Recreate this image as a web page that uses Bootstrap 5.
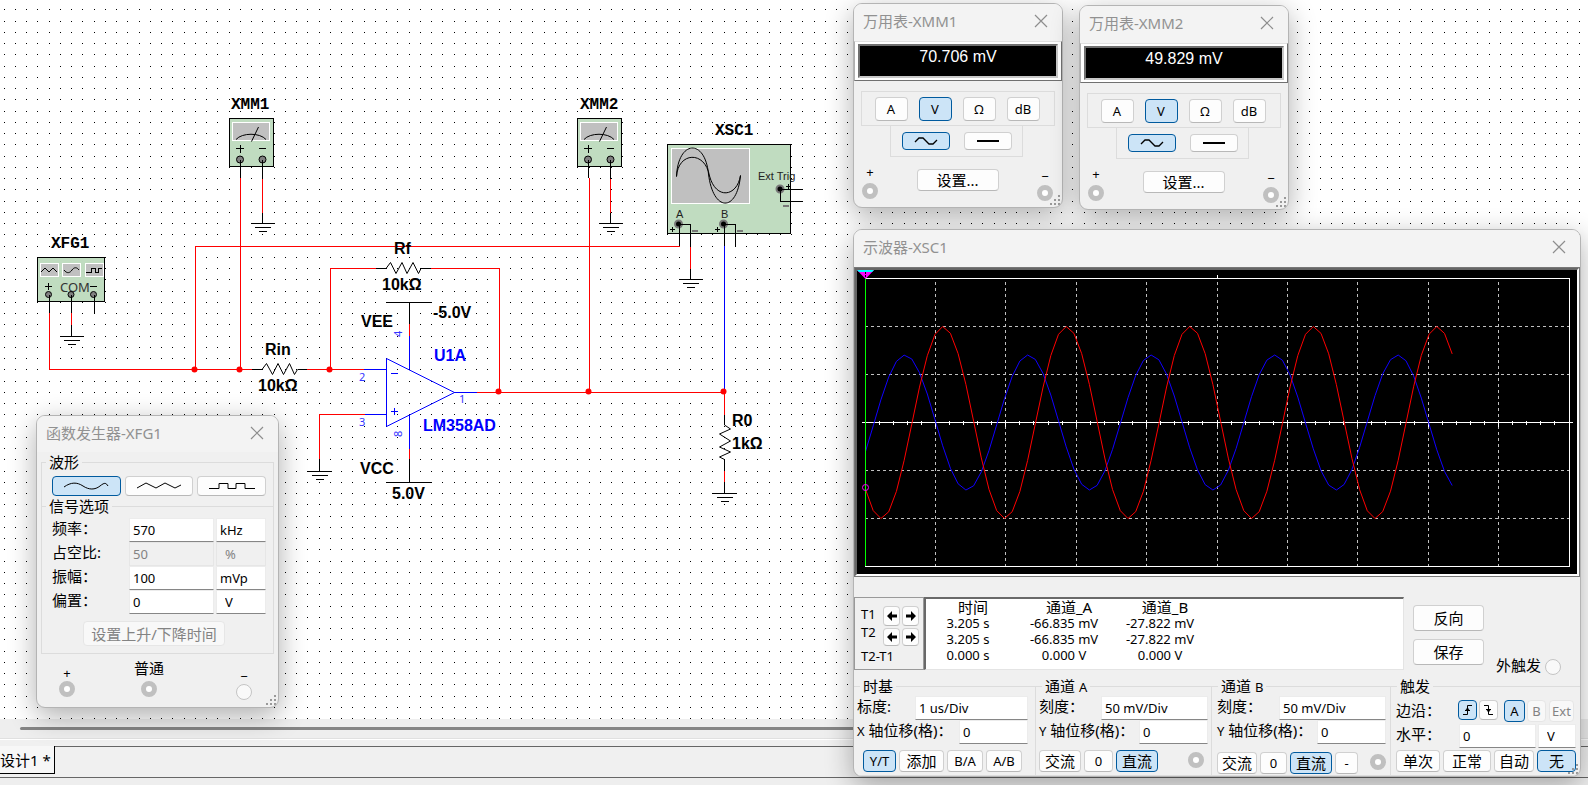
<!DOCTYPE html>
<html lang="zh-CN">
<head>
<meta charset="utf-8">
<meta name="viewport" content="width=device-width, initial-scale=1">
<title>设计1</title>
<link href="https://cdn.jsdelivr.net/npm/bootstrap@5.3.0/dist/css/bootstrap.min.css" rel="stylesheet">
<style>
  :root { --face: #f0f0f0; --rule: #dcdcdc; --accent: #005a9e; --accent-bg: #cce4f7; }
  body { font: 13px/16px "Noto Sans", "Noto Sans CJK SC", sans-serif; color: #000; background: #fff; }
  .desk { z-index: 0; }
  .sheet { shape-rendering: crispEdges; }
  .sheet .smooth, .sheet circle, .sheet text { shape-rendering: auto; }
  .sheet .lbl { font: bold 16px "Liberation Sans", sans-serif; }
  .sheet .ref { font: bold 16px "Liberation Mono", monospace; }
  .sheet .pin { font: 11px "Noto Sans", sans-serif; fill: #33f; }
  .sheet .port { font: 11px "Liberation Sans", sans-serif; fill: #222; }
  .k, .r, .b { fill: none; stroke: #000; }
  .r { stroke: #f00; } .b { stroke: #00f; }
  .body-fill { fill: #c0dcc0; stroke: #000; }
  .scr { fill: #c0c0c0; stroke: #fff; }
  .term { fill: #808080; stroke: #000; }

  .hscroll { height: 20px; background: #eee; border-bottom: 1px solid #e0e0e0; padding: 8px 0 0 20px; }
  .hscroll .thumb { height: 3px; width: 80%; background: #858585; border-radius: 2px; }
  .tabs { height: 39px; padding-top: 6px; background: var(--face); border-top: 1px solid #fff; border-bottom: 1px solid #666; }
  .tabs .rest { border-top: 1px solid #666; }
  .tabs .tab { width: 55px; height: 28px; border: 0; border-right: 1px solid #000; border-bottom: 1px solid #000; background: #f7f7f7; font-size: 15px; padding: 0; white-space: nowrap; text-align: left; }
  .foot { height: 7px; background: #eee; }

  .win { position: absolute; background: var(--face); border: 1px solid #b4b4b4; border-radius: 9px; box-shadow: 0 8px 28px rgba(0,0,0,.32); overflow: hidden; }
  .win .bar { height: 37px; padding: 0 14px 3px 9px; background: #f3f3f3; color: #919191; font-size: 15px; line-height: 20px; }
  .win.xfg .bar { height: 36px; }
  .win .x { border: 0; background: none; padding: 0; width: 14px; height: 14px; display: flex; color: #8d8d8d; }
  .xfg { left: 36px; top: 415px; width: 243px; }
  .xmm1 { left: 853px; top: 3px; width: 210px; }
  .xmm2 { left: 1079px; top: 5px; width: 210px; }
  .xsc { left: 853px; top: 229px; width: 728px; }
  .grip { position: absolute; right: 1px; bottom: 1px; width: 11px; height: 11px; }

  .key { border: 1px solid #d0d0d0; border-bottom-color: #b8b8b8; border-radius: 4px; background: #fdfdfd; color: #000; padding: 0; display: flex; align-items: center; justify-content: center; font-size: 13px; line-height: 16px; white-space: nowrap; }
  .key.on { border-color: var(--accent); background: var(--accent-bg); }
  .key:disabled { color: #838383; background: #f8f8f8; border-color: #e6e6e6; }
  .zh { font-size: 15px; line-height: 20px; }
  .edit { border: 1px solid #ececec; border-bottom-color: #868686; background: #fff; padding: 0 3px; height: 24px; font: inherit; color: #000; min-width: 0; border-radius: 0; }
  .edit:disabled { background: var(--face); color: #838383; border-color: #e6e6e6; }
  .jack { display: block; width: 16px; height: 16px; border-radius: 50%; border: 5px solid #c0c0c0; background: #fff; }
  .jack.idle { border: 1px solid #c4c4c4; background: #f9f9f9; }

  fieldset.grp { border: 1px solid var(--rule); min-width: 0; }
  fieldset.grp > legend { float: none; width: auto; margin: 0 0 0 3px; padding: 0 3px; font-size: 15px; line-height: 20px; height: 20px; white-space: nowrap; }
  .grp small { font-size: 13px; }
  .xfg .grp { padding: 0 7px 0 6px; }
  .xfg .grp > legend { margin-left: -2px; }
  .xfg .wave-grp { height: 55px; border-bottom: 0; }
  .xfg .sig-grp { margin-top: -11px; padding-top: 2px; }
  .xfg .val { width: 85px; margin-right: 2px; }
  .xfg .unit { width: 50px; }
  .xfg .jacks { height: 53px; padding: 0 22px 0 18px; }

  .lcd { border: 1px solid; border-color: #e0e0e0 #707070 #707070 #b0b0b0; background: #fff; padding: 2px 3px; }
  .lcd output { display: block; height: 34px; border: 2px solid; border-color: #707070 #c8c8c8 #c8c8c8 #707070; background: #000; color: #fff; font: 16px/22px "Liberation Sans", sans-serif; text-align: center; }
  .modes { width: 194px; height: 35px; border: 1px solid var(--rule); gap: 11px; margin: 10px 0 0 7px; padding-right: 2px; }
  .waves { width: 133px; height: 31px; border: 1px solid var(--rule); border-top: 0; gap: 14px; margin-left: 36px; }
  .modes .key { width: 33px; height: 24px; }
  .waves .key { width: 48px; height: 18px; }
  .probe { padding: 7px 9px 6px 8px; }
  .probe .key { width: 82px; height: 22px; margin-top: 5px; }
  .probe .jack { margin-top: 3px; }
  .probe .neg .jack { margin-top: 1px; }

  .crt { border: 2px solid #666; border-right-color: #fff; border-bottom-color: #fff; outline: 1px solid #777; background: #000; margin: 1px 1px 0 1px; }
  .crt svg { display: block; width: 100%; height: 304px; }
  .tbox { width: 70px; height: 73px; border: 1px solid #999; padding: 0 4px 0 6px; }
  .tbox .key { width: 17px; height: 20px; }
  .tbox .names span { display: block; margin-bottom: 2px; }
  .tbox .names span + span { margin-bottom: 8px; }
  .reads { border: 1px solid #e4e4e4; border-top: 2px solid #696969; border-left: 2px solid #696969; background: #fff; width: 480px; }
  .reads table { width: 276px; table-layout: fixed; text-align: center; margin: 0; }
  .reads th { font-weight: 400; font-size: 15px; line-height: 16px; padding: 0 0 0 10px; }
  .reads td { padding: 0; line-height: 16px; }
  .ext { margin-bottom: -5px; }
  .panels { display: grid; grid-template-columns: 182fr 176fr 179fr 189fr; margin-top: 6px; }
  .panels .grp { height: 100px; border-left: 0; padding: 0 7px 0 3px; }
  .panels .cha { padding-right: 3px; }
  .panels .chb, .panels .trg { padding: 0 4px 0 5px; }
  .panels .chb > legend, .panels .trg > legend { margin-left: 1px; }
  .panels label { white-space: nowrap; }
  .panels .keys { gap: 3px; height: 22px; margin-top: 6px; }
  .panels .chb .keys { margin-top: 8px; }
  .panels .trg .keys { margin-top: 2px; }
  .panels .keys .key { height: 22px; }
  .panels .keys .jack { margin-top: 2px; }
</style>
</head>
<body class="vh-100 d-flex flex-column overflow-hidden position-relative">

<main class="desk flex-fill position-relative">
<svg class="sheet d-block position-absolute w-100 h-100" aria-label="电路图">
  <defs>
    <pattern id="dots" width="45" height="45" patternUnits="userSpaceOnUse">
      <path stroke="#000" stroke-dasharray="1 44" d="M4 9.5h41M15 9.5h41M26 9.5h41M37 9.5h41M4 21.5h41M15 21.5h41M26 21.5h41M37 21.5h41M4 32.5h41M15 32.5h41M26 32.5h41M37 32.5h41M4 43.5h41M15 43.5h41M26 43.5h41M37 43.5h41"/>
    </pattern>
    <g id="gnd"><path class="k" d="M-11.5 .5h24M-7.5 4.5h16M-3.5 8.5h8"/></g>
    <g id="meter">
      <rect class="body-fill" x="229.5" y="118.5" width="44" height="48"/>
      <rect class="scr" x="232.5" y="122.5" width="37" height="18"/>
      <path class="k smooth" d="M236 139.500C242 132.500 260 132.500 266 139.500M251.500 141.500L258.500 127"/>
      <path class="k" d="M236 148.500h8M240.500 145v8M259 148.500h7"/>
      <circle class="term" cx="240" cy="159.500" r="3.500"/><circle class="term" cx="262.500" cy="159.500" r="3.500"/>
      <path class="k" d="M240.500 160v18M262.500 160v19M262.500 213v10"/>
      <path class="r" d="M262.500 179v34"/>
      <use href="#gnd" x="262" y="223"/>
    </g>
  </defs>
  <rect width="100%" height="100%" fill="url(#dots)"/>

  <g>
    <use href="#meter"/><use href="#meter" x="348"/>
    <rect class="body-fill" x="37.500" y="257.500" width="67" height="44"/>
    <rect class="scr" x="40.500" y="263.500" width="18" height="13"/><rect class="scr" x="62.500" y="263.500" width="18" height="13"/><rect class="scr" x="85.500" y="263.500" width="18" height="13"/>
    <path class="k smooth" d="M41 272l4-4 4 4 4-4 4 4M64 270c3 4 6 3 8 0s5-3 7 0"/>
    <path class="k" d="M86 272.500h5v-4h4v4h3v-4h4M45 286.500h7M48.500 283v7M90 286.500h7"/>
    <text x="60" y="292" font-size="13" fill="#333">COM</text>
    <circle class="term" cx="48.500" cy="294.500" r="3"/><circle class="term" cx="71" cy="294.500" r="3"/><circle class="term" cx="93.500" cy="294.500" r="3"/>
    <path class="k" d="M49.500 295v18M71.500 295v18M94.500 295v18M71.500 325v11"/>
    <path class="r" d="M71.500 313v12"/><use href="#gnd" x="71" y="336"/>
    <rect class="body-fill" x="667.500" y="144.500" width="123" height="89"/>
    <rect class="scr" x="671.500" y="148.500" width="78" height="55"/>
    <path class="k smooth" d="M676.500 176.500C678 140 705 138 708.500 174C713 212 737 213 740.500 175.500M676.500 176.500C678 152 705 150 709.500 176C716 200 737 197 740.500 175.500"/>
    <text class="port" x="758" y="180">Ext Trig</text><text class="port" x="676" y="218">A</text><text class="port" x="721" y="218">B</text>
    <g fill="#000" stroke="#777" stroke-width="2"><circle cx="678.500" cy="224" r="3.500"/><circle cx="723.500" cy="224" r="3.500"/><circle cx="780" cy="189" r="3.500"/></g>
    <path class="k" d="M670 229.500h5M672.500 227v5M715 229.500h5M717.500 227v5M786 186.500h5M788.500 184v5"/>
    <path stroke="#777" stroke-width="2" d="M692 231h6M737 231h6M783 206h6"/>
    <path class="k" d="M679.500 224v22M679 224.500h11.500V247M690.500 269v10M724.500 224v22M724 224.500h11.500V247M780 189.500h23M780.500 189v12.500H803"/>
    <path class="r" d="M690.500 247v22"/><use href="#gnd" x="690" y="279"/>
  </g>

  <path class="r" d="M49.500 313v56.500H252M307 369.500H364M195.500 369V246.500H679.500M240.500 178V369M330.500 369V268.500H376M431 268.500h68.500V392M477 392.500H724.500V415M589.500 178V392M409.500 324v12M409.500 449v10M365 414.500H319.500V459M724.500 471v11"/>
  <path class="b" d="M364 369.500h22M454 392.500h23M365 414.500h21M409.500 336v33M409.500 415v34M724.500 246V390M391 373.500h7M391 411.500h7M394.500 408v7"/>
  <path class="b smooth" d="M386.500 358.500V426.500L454.500 392.500Z"/>
  <path class="k" d="M252 369.500h10M298 369.500h9M376 268.500h10M421 268.500h10M386 302.500h46M409.500 302v22M409.500 459v23M386 482.500h46M319.500 459v12M724.500 415v10M724.500 459v12M724.500 482v11"/>
  <path class="k smooth" d="M262 369.500L266.500 363.500L272.500 374.500L278 363.500L283.500 374.500L289.500 363.500L294.500 374.500L297.500 369.500M386 268.500L390.500 262.500L396 273.500L402 262.500L407 273.500L413 262.500L418.500 273.500L421 268.500M724.500 425L730.500 429L719.500 434L730.500 441L719.500 447L730.500 452L719.500 457L724.500 459.500"/>
  <use href="#gnd" x="319" y="471"/><use href="#gnd" x="724" y="493"/>
  <g fill="#f00"><circle cx="194.500" cy="369.500" r="3"/><circle cx="239.500" cy="369.500" r="3"/><circle cx="329.500" cy="369.500" r="3"/><circle cx="498.500" cy="391.500" r="3"/><circle cx="588.500" cy="391.500" r="3"/><circle cx="723.500" cy="391.500" r="3"/></g>

  <g class="ref"><text x="231" y="109">XMM1</text><text x="580" y="109">XMM2</text><text x="51" y="248">XFG1</text><text x="715" y="135">XSC1</text></g>
  <g class="lbl"><text x="394" y="254">Rf</text><text x="382" y="290">10kΩ</text><text x="361" y="327">VEE</text><text x="433" y="318">-5.0V</text><text x="360" y="474">VCC</text><text x="392" y="499">5.0V</text><text x="265" y="355">Rin</text><text x="258" y="391">10kΩ</text><text x="732" y="426">R0</text><text x="732" y="449">1kΩ</text><text x="434" y="361" fill="#00f">U1A</text><text x="423" y="431" fill="#00f">LM358AD</text></g>
  <text class="pin" x="359" y="381">2</text><text class="pin" x="359" y="426">3</text><text class="pin" x="459" y="403">1</text>
  <text class="pin" transform="translate(402 337) rotate(-90)">4</text><text class="pin" transform="translate(402 437) rotate(-90)">8</text>
</svg>
</main>

<div class="hscroll"><div class="thumb"></div></div>
<nav class="tabs d-flex"><button class="tab" type="button">设计1 *</button><div class="rest flex-fill"></div></nav>
<div class="foot"></div>

<svg width="0" height="0" class="position-absolute"><defs>
  <symbol id="close" viewBox="0 0 14 14"><path d="M1 1l12 12M13 1L1 13" stroke="currentColor" stroke-width="1.200"/></symbol>
  <symbol id="grip" viewBox="0 0 11 11"><path fill="#999" d="M8 0h2v2h-2zM4 4h2v2h-2zM8 4h2v2h-2zM0 8h2v2h-2zM4 8h2v2h-2zM8 8h2v2h-2z"/></symbol>
  <symbol id="ac" viewBox="0 0 24 10"><path fill="none" stroke="#000" stroke-width="1.300" d="M1 6l4-4h4l6 6h4l4-4"/></symbol>
  <symbol id="left" viewBox="0 0 10 10"><path d="M0 5l5-5v3.500h5v3H5V10z"/></symbol>
  <symbol id="right" viewBox="0 0 10 10"><path d="M10 5L5 0v3.500H0v3h5V10z"/></symbol>
</defs></svg>

<section class="win xfg">
  <header class="bar d-flex align-items-center justify-content-between"><span>函数发生器-XFG1</span><button class="x" aria-label="关闭"><svg width="14" height="14"><use href="#close"/></svg></button></header>
  <div class="px-1">
    <fieldset class="grp wave-grp">
      <legend>波形</legend>
      <div class="d-flex gap-1 ps-1 pt-1">
        <button class="key on flex-fill" style="height:20px" aria-label="正弦波"><svg width="46" height="8" fill="none" stroke="#000"><path d="M1 5C8 0 14 0 20 4S32 8 37 4 43 1 45 4"/></svg></button>
        <button class="key flex-fill" aria-label="三角波"><svg width="46" height="8" fill="none" stroke="#000"><path d="M1 6L10 1L20 6L29 1L39 6L45 3"/></svg></button>
        <button class="key flex-fill" aria-label="方波"><svg width="46" height="8" fill="none" stroke="#000"><path d="M0 6.500h10v-5h9v5h8v-5h9v5h10"/></svg></button>
      </div>
    </fieldset>
    <fieldset class="grp sig-grp">
      <legend>信号选项</legend>
      <div class="d-flex ps-1"><label class="zh flex-fill" for="fq">频率：</label><input class="edit val" id="fq" value="570"><input class="edit unit" value="kHz" aria-label="频率单位"></div>
      <div class="d-flex ps-1"><label class="zh flex-fill" for="du">占空比:</label><input class="edit val" id="du" value="50" disabled><input class="edit unit ps-2" value="%" disabled aria-label="占空比单位"></div>
      <div class="d-flex ps-1"><label class="zh flex-fill" for="am">振幅：</label><input class="edit val" id="am" value="100"><input class="edit unit" value="mVp" aria-label="振幅单位"></div>
      <div class="d-flex ps-1"><label class="zh flex-fill" for="of">偏置：</label><input class="edit val" id="of" value="0"><input class="edit unit ps-2" value="V" aria-label="偏置单位"></div>
      <button class="key zh" style="width:142px;height:25px;margin:7px auto 7px 35px" disabled>设置上升/下降时间</button>
    </fieldset>
    <div class="jacks d-flex align-items-start text-center">
      <div style="padding-top:11px">+<i class="jack"></i></div>
      <div class="zh d-flex flex-column align-items-center pt-1" style="margin-left:59px">普通<i class="jack" style="margin-top:3px"></i></div>
      <div class="ms-auto" style="padding-top:14px">−<i class="jack idle"></i></div>
    </div>
  </div>
  <svg class="grip"><use href="#grip"/></svg>
</section>

<section class="win xmm1">
  <header class="bar d-flex align-items-center justify-content-between"><span>万用表-XMM1</span><button class="x" aria-label="关闭"><svg width="14" height="14"><use href="#close"/></svg></button></header>
  <div class="lcd"><output>70.706 mV</output></div>
  <div class="modes d-flex align-items-center justify-content-center"><button class="key">A</button><button class="key on">V</button><button class="key">Ω</button><button class="key">dB</button></div>
  <div class="waves d-flex align-items-center justify-content-center"><button class="key on" aria-label="交流"><svg width="24" height="10"><use href="#ac"/></svg></button><button class="key" aria-label="直流"><svg width="22" height="2"><path d="M0 0h22v2H0z"/></svg></button></div>
  <div class="probe d-flex align-items-start justify-content-between text-center">
    <div>+<i class="jack"></i></div>
    <button class="key zh">设置...</button>
    <div class="neg pt-1">−<i class="jack"></i></div>
  </div>
  <svg class="grip"><use href="#grip"/></svg>
</section>

<section class="win xmm2">
  <header class="bar d-flex align-items-center justify-content-between"><span>万用表-XMM2</span><button class="x" aria-label="关闭"><svg width="14" height="14"><use href="#close"/></svg></button></header>
  <div class="lcd"><output>49.829 mV</output></div>
  <div class="modes d-flex align-items-center justify-content-center"><button class="key">A</button><button class="key on">V</button><button class="key">Ω</button><button class="key">dB</button></div>
  <div class="waves d-flex align-items-center justify-content-center"><button class="key on" aria-label="交流"><svg width="24" height="10"><use href="#ac"/></svg></button><button class="key" aria-label="直流"><svg width="22" height="2"><path d="M0 0h22v2H0z"/></svg></button></div>
  <div class="probe d-flex align-items-start justify-content-between text-center">
    <div>+<i class="jack"></i></div>
    <button class="key zh">设置...</button>
    <div class="neg pt-1">−<i class="jack"></i></div>
  </div>
  <svg class="grip"><use href="#grip"/></svg>
</section>

<section class="win xsc">
  <header class="bar d-flex align-items-center justify-content-between"><span>示波器-XSC1</span><button class="x" aria-label="关闭"><svg width="14" height="14"><use href="#close"/></svg></button></header>
  <div class="crt">
    <svg viewBox="0 0 720 304" id="scope" fill="none">
      <g id="grid" stroke="#c0c0c0" stroke-dasharray="3 3" shape-rendering="crispEdges"></g>
      <path stroke="#fff" shape-rendering="crispEdges" d="M8 8.500H712.500V296.500H8M5 152.500H716M360.500 5v4"/>
      <path id="ticks" stroke="#fff" shape-rendering="crispEdges"/>
      <path id="chB" stroke="#10f"/>
      <path id="chA" stroke="#f00"/>
      <path stroke="#0f0" shape-rendering="crispEdges" d="M8.500 8V296"/>
      <path fill="#f0f" d="M0 0H17L8.500 9z"/><path fill="#0ff" d="M0 0H17L15 2H2z"/><path stroke="#000" stroke-dasharray="2 1" d="M8.500 2v5"/>
      <circle cx="8.500" cy="217.500" r="3" stroke="#f0f"/>
    </svg>
  </div>
  <div class="d-flex" style="margin-top:21px">
    <div class="tbox d-flex justify-content-between">
      <div class="names pt-2 text-nowrap" style="width:20px"><span>T1</span><span>T2</span><span>T2-T1</span></div>
      <div class="d-grid align-content-start pt-2" style="grid-template-columns:17px 17px;gap:2px">
        <button class="key" aria-label="T1 左移"><svg width="10" height="10"><use href="#left"/></svg></button><button class="key" aria-label="T1 右移"><svg width="10" height="10"><use href="#right"/></svg></button>
        <button class="key" style="height:18px" aria-label="T2 左移"><svg width="10" height="10"><use href="#left"/></svg></button><button class="key" style="height:18px" aria-label="T2 右移"><svg width="10" height="10"><use href="#right"/></svg></button>
      </div>
    </div>
    <div class="reads">
      <table>
        <colgroup><col style="width:84px"><col style="width:108px"><col style="width:84px"></colgroup>
        <thead><tr><th>时间</th><th>通道_A</th><th>通道_B</th></tr></thead>
        <tbody><tr><td>3.205 s</td><td>-66.835 mV</td><td class="text-nowrap">-27.822 mV</td></tr><tr><td>3.205 s</td><td>-66.835 mV</td><td class="text-nowrap">-27.822 mV</td></tr><tr><td>0.000 s</td><td>0.000 V</td><td>0.000 V</td></tr></tbody>
      </table>
    </div>
    <div class="d-flex flex-column gap-2 pt-2" style="margin-left:9px"><button class="key zh" style="width:71px;height:26px">反向</button><button class="key zh" style="width:71px;height:26px">保存</button></div>
    <div class="ext d-flex align-items-end ms-auto pe-3 gap-1"><span class="zh">外触发</span><i class="jack idle" style="margin-right:3px"></i></div>
  </div>
  <div class="panels">
    <fieldset class="grp"><legend>时基</legend>
      <div class="d-flex justify-content-between"><label class="zh" for="tb">标度:</label><input class="edit" style="width:113px" id="tb" value="1 us/Div"></div>
      <div class="d-flex justify-content-between"><label class="zh" for="xp"><small>X</small> 轴位移(格)：</label><input class="edit" style="width:69px" id="xp" value="0"></div>
      <div class="keys d-flex" style="padding-left:6px"><button class="key on" style="width:33px">Y/T</button><button class="key zh" style="width:45px">添加</button><button class="key" style="width:36px">B/A</button><button class="key" style="width:36px">A/B</button></div>
    </fieldset>
    <fieldset class="grp cha"><legend>通道 <small>A</small></legend>
      <div class="d-flex justify-content-between"><label class="zh" for="as">刻度：</label><input class="edit" style="width:107px" id="as" value="50 mV/Div"></div>
      <div class="d-flex justify-content-between"><label class="zh" for="ap"><small>Y</small> 轴位移(格)：</label><input class="edit" style="width:69px" id="ap" value="0"></div>
      <div class="keys d-flex"><button class="key zh" style="width:42px">交流</button><button class="key" style="width:29px">0</button><button class="key zh on" style="width:42px">直流</button><i class="jack ms-auto me-1"></i></div>
    </fieldset>
    <fieldset class="grp chb"><legend>通道 <small>B</small></legend>
      <div class="d-flex justify-content-between"><label class="zh" for="bs">刻度：</label><input class="edit" style="width:107px" id="bs" value="50 mV/Div"></div>
      <div class="d-flex justify-content-between"><label class="zh" for="bp"><small>Y</small> 轴位移(格)：</label><input class="edit" style="width:69px" id="bp" value="0"></div>
      <div class="keys d-flex"><button class="key zh" style="width:40px">交流</button><button class="key" style="width:27px">0</button><button class="key zh on" style="width:42px">直流</button><button class="key" style="width:23px">-</button><i class="jack ms-auto"></i></div>
    </fieldset>
    <fieldset class="grp trg border-end-0"><legend>触发</legend>
      <div class="d-flex pt-1"><span class="zh me-auto">边沿：</span>
        <button class="key on" style="width:19px;height:20px" aria-label="上升沿"><svg width="12" height="12" fill="none" stroke="#000"><path d="M1 10.500h4.500v-9H10M3 6.500h5M4 6l1.500-2L7 6"/></svg></button>
        <button class="key" style="width:19px;height:20px;margin:0 6px 0 2px" aria-label="下降沿"><svg width="12" height="12" fill="none" stroke="#000"><path d="M1 1.500h4.500v9H10M3 5.500h5M4 6l1.500 2L7 6"/></svg></button>
        <button class="key on" style="width:21px;height:22px">A</button><button class="key" style="width:19px;height:22px;margin:0 3px 0 2px" disabled>B</button><button class="key" style="width:25px;height:22px;margin-right:2px" disabled>Ext</button></div>
      <div class="d-flex" style="padding-top:2px"><label class="zh me-auto" for="lv">水平：</label><input class="edit" style="width:77px;margin-right:2px" id="lv" value="0"><input class="edit ps-2" style="width:38px" value="V" aria-label="水平单位"></div>
      <div class="keys d-flex"><button class="key zh" style="width:44px">单次</button><button class="key zh" style="width:48px">正常</button><button class="key zh" style="width:40px">自动</button><button class="key zh on flex-fill">无</button></div>
    </fieldset>
  </div>
  <svg class="grip"><use href="#grip"/></svg>
</section>

<script src="https://cdn.jsdelivr.net/npm/bootstrap@5.3.0/dist/js/bootstrap.bundle.min.js"></script>
<script>
  const NS = 'http://www.w3.org/2000/svg';
  const line = d => { const p = document.createElementNS(NS, 'path'); p.setAttribute('d', d); document.getElementById('grid').append(p); };
  for (let i = 1; i < 10; i++) line(`M${Math.floor(8 + i * 70.4) + .5} 12V296`);
  [56, 104, 200, 248].forEach(y => line(`M8 ${y}.5H712`));
  let t = '';
  for (let i = 1; i < 50; i++) t += `M${Math.floor(8 + i * 14.08) + .5} ${i % 5 ? '151v4' : '150v7'}`;
  document.getElementById('ticks').setAttribute('d', t);
  // both channels share one period, sampled sixteen times per cycle
  const wave = (amp, peak, period) => {
    const pts = [];
    for (let x = 8.5; x <= 596; x += 7.72) pts.push(`${x.toFixed(1)} ${(152.5 - amp * Math.cos(2 * Math.PI * (x - peak) / period)).toFixed(1)}`);
    return 'M' + pts.join('L');
  };
  document.getElementById('chA').setAttribute('d', wave(96, 86, 123.5));
  document.getElementById('chB').setAttribute('d', wave(67.5, 48, 123.2));
</script>
</body>
</html>
